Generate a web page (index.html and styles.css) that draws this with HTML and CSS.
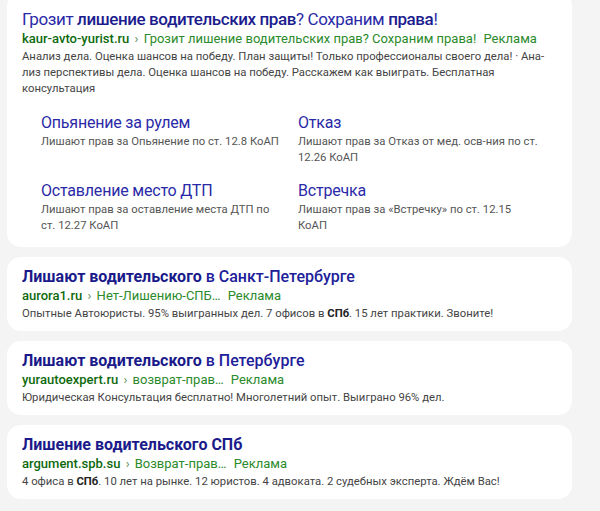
FILE: index.html
```html
<!DOCTYPE html>
<html lang="ru">
<head>
    <meta charset="UTF-8">
    <title>Реклама</title>
    <link rel="stylesheet" href="styles.css">
</head>
<body>
    <div class="results">
        <div class="card card-main">
            <div class="title title-light">Грозит <b>лишение водительских прав</b>? Сохраним <b>права</b>!</div>
            <div class="url"><b>kaur-avto-yurist.ru</b> <span class="sep">›</span> Грозит лишение водительских прав? Сохраним права! <span class="ad">Реклама</span></div>
            <div class="text">Анализ дела. Оценка шансов на победу. План защиты! Только профессионалы своего дела! · Ана&shy;лиз перспективы дела. Оценка шансов на победу. Расскажем как выиграть. Бесплатная консультация</div>

            <div class="sitelinks">
                <div class="sitelink">
                    <div class="sitelink-title">Опьянение за рулем</div>
                    <div class="sitelink-text">Лишают прав за Опьянение по ст. 12.8 КоАП</div>
                </div>
                <div class="sitelink">
                    <div class="sitelink-title">Отказ</div>
                    <div class="sitelink-text">Лишают прав за Отказ от мед. осв-ния по ст. 12.26 КоАП</div>
                </div>
                <div class="sitelink">
                    <div class="sitelink-title">Оставление место ДТП</div>
                    <div class="sitelink-text">Лишают прав за оставление места ДТП по ст. 12.27 КоАП</div>
                </div>
                <div class="sitelink">
                    <div class="sitelink-title">Встречка</div>
                    <div class="sitelink-text">Лишают прав за «Встречку» по ст. 12.15 КоАП</div>
                </div>
            </div>
        </div>

        <div class="card">
            <div class="title"><b>Лишают водительского</b> в Санкт-Петербурге</div>
            <div class="url"><b>aurora1.ru</b> <span class="sep">›</span> Нет-Лишению-СПБ… <span class="ad">Реклама</span></div>
            <div class="text">Опытные Автоюристы. 95% выигранных дел. 7 офисов в <b>СПб</b>. 15 лет практики. Звоните!</div>
        </div>

        <div class="card">
            <div class="title"><b>Лишают водительского</b> в Петербурге</div>
            <div class="url"><b>yurautoexpert.ru</b> <span class="sep">›</span> возврат-прав… <span class="ad">Реклама</span></div>
            <div class="text">Юридическая Консультация бесплатно! Многолетний опыт. Выиграно 96% дел.</div>
        </div>

        <div class="card">
            <div class="title"><b>Лишение водительского СПб</b></div>
            <div class="url"><b>argument.spb.su</b> <span class="sep">›</span> Возврат-прав… <span class="ad">Реклама</span></div>
            <div class="text">4 офиса в <b>СПб</b>. 10 лет на рынке. 12 юристов. 4 адвоката. 2 судебных эксперта. Ждём Вас!</div>
        </div>
    </div>
</body>
</html>
```

FILE: styles.css
```css
* {
    margin: 0;
    padding: 0;
    box-sizing: border-box;
}

body {
    background: #f4f4f4;
    font-family: Roboto, Arial, sans-serif;
    color: #333;
}

.results {
    width: 572px;
    padding: 0 0 0 7px;
    display: flex;
    flex-direction: column;
    gap: 10px;
    margin-top: -8px;
}

.card {
    background: #fff;
    border-radius: 14px;
    padding: 10px 15px 9px;
}

.card-main {
    padding-top: 16px;
    padding-bottom: 13px;
}

.title {
    font-size: 16px;
    line-height: 20px;
    color: #20209a;
    font-weight: 500;
}

.title b {
    font-weight: 700;
    color: #1a1a8a;
}

.title-light {
    font-size: 17px;
    line-height: 22px;
    letter-spacing: -0.4px;
    font-weight: 400;
    color: #2a2aa8;
}

.title-light b {
    font-weight: 500;
    color: #1c1c8e;
}

.url {
    font-size: 13px;
    line-height: 18px;
    color: #2b8a2b;
    white-space: nowrap;
}

.url b {
    color: #0d6a0d;
    font-weight: 500;
}

.sep {
    color: #5a8a5a;
    margin: 0 2px;
}

.ad {
    margin-left: 4px;
}

.text {
    font-size: 11.3px;
    line-height: 16px;
    color: #444;
    margin-top: 1px;
}

.text b {
    font-weight: 700;
    color: #222;
}

.sitelinks {
    display: grid;
    grid-template-columns: 245px 242px;
    column-gap: 12px;
    row-gap: 15px;
    padding: 16px 0 0 19px;
}

.sitelink-title {
    font-size: 16px;
    line-height: 20px;
    letter-spacing: -0.2px;
    color: #2a2aa8;
}

.sitelink-text {
    font-size: 11.3px;
    line-height: 16px;
    color: #555;
    margin-top: 1px;
}
```
